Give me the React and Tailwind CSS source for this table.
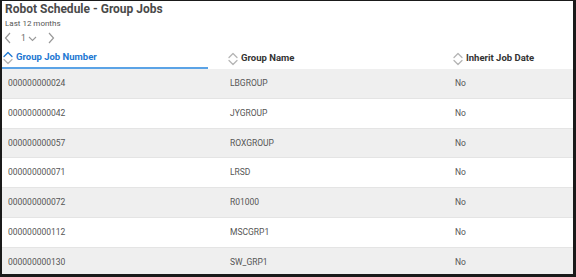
import React from 'react'

const rows = [
  { id: '000000000024', name: 'LBGROUP', inherit: 'No' },
  { id: '000000000042', name: 'JYGROUP', inherit: 'No' },
  { id: '000000000057', name: 'ROXGROUP', inherit: 'No' },
  { id: '000000000071', name: 'LRSD', inherit: 'No' },
  { id: '000000000072', name: 'R01000', inherit: 'No' },
  { id: '000000000112', name: 'MSCGRP1', inherit: 'No' },
  { id: '000000000130', name: 'SW_GRP1', inherit: 'No' }
]

const SortIcon = ({ active }) => (
  <svg width="10" height="14" viewBox="0 0 10 14" fill="none" strokeWidth="1.3" strokeLinecap="round" strokeLinejoin="round">
    <path d="M1 5.5 L5 1.5 L9 5.5" stroke={active ? '#1e78d2' : '#b5b5b5'} />
    <path d="M1 8.5 L5 12.5 L9 8.5" stroke="#b5b5b5" />
  </svg>
)

export default function App() {
  return (
    <div className="w-[576px] h-[277px] overflow-hidden bg-white border-l-2 border-t border-r-[3px] border-b-[3px] border-[#1a1a1a] font-['Roboto',sans-serif] text-[#444]">
      {/* Title block */}
      <div className="pl-[3px] pt-[1px]">
        <h1 className="text-[12px] font-bold leading-[15px] text-[#4a4a4a]">Robot Schedule - Group Jobs</h1>
        <div className="text-[8px] leading-[11px] text-[#555] mt-[1px]">Last 12 months</div>
        <div className="flex items-center h-[16px] mt-[1px] text-[#888]">
          <svg width="8" height="12" viewBox="0 0 8 12" fill="none" stroke="#999" strokeWidth="1.2" className="-ml-[1px]">
            <path d="M6 1 L1.5 6 L6 11" />
          </svg>
          <span className="ml-[9px] text-[8.5px] text-[#666]">1</span>
          <svg width="9" height="6" viewBox="0 0 9 6" fill="none" stroke="#999" strokeWidth="1.1" className="ml-[2px] mt-[2px]">
            <path d="M1 1 L4.5 4.5 L8 1" />
          </svg>
          <svg width="8" height="12" viewBox="0 0 8 12" fill="none" stroke="#999" strokeWidth="1.2" className="ml-[10px]">
            <path d="M2 1 L6.5 6 L2 11" />
          </svg>
        </div>
      </div>

      {/* Header */}
      <div className="grid grid-cols-[224px_224px_1fr] h-[21px] mt-[2px] text-[9.5px] font-bold">
        <div className="flex items-center gap-[3px] pl-[1px] text-[#1e78d2] border-b-2 border-[#5ba3e6] mr-[18px]">
          <SortIcon active />
          <span>Group Job Number</span>
        </div>
        <div className="flex items-center gap-[3px] text-[#333] pl-[2px]">
          <SortIcon />
          <span>Group Name</span>
        </div>
        <div className="flex items-center gap-[3px] text-[#333] pl-[3px]">
          <SortIcon />
          <span>Inherit Job Date</span>
        </div>
      </div>

      {/* Rows */}
      <div>
        {rows.map((r, i) => (
          <div
            key={r.id}
            className={`grid grid-cols-[224px_224px_1fr] h-[29.8px] items-center text-[8.5px] text-[#555] border-b border-[#e4e4e4] ${
              i % 2 === 0 ? 'bg-[#efefef]' : 'bg-white'
            }`}
          >
            <div className="pl-[6px]">{r.id}</div>
            <div className="pl-[4px]">{r.name}</div>
            <div className="pl-[5px]">{r.inherit}</div>
          </div>
        ))}
      </div>
    </div>
  )
}
